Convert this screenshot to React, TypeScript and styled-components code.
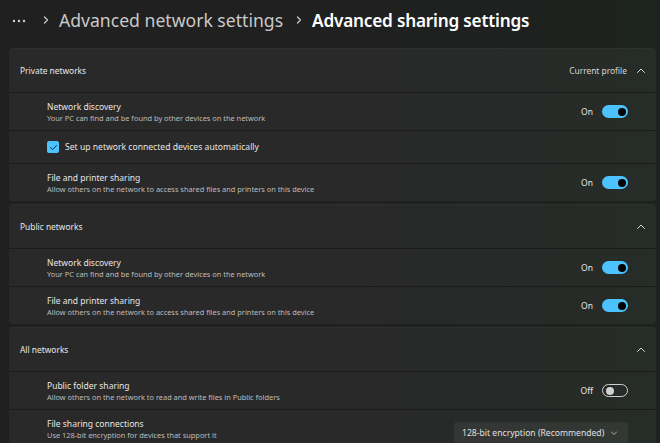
import React from "react";
import styled, { createGlobalStyle } from "styled-components";

const GlobalStyle = createGlobalStyle`
  html, body {
    margin: 0;
    padding: 0;
    background: #202020;
  }
  body {
    font-family: "Noto Sans", "Open Sans", sans-serif;
    color: #ffffff;
    -webkit-font-smoothing: antialiased;
  }
`;

type Setting = {
  kind: "toggle" | "check" | "select";
  title: string;
  desc?: string;
  on?: boolean;
  value?: string;
};

type Section = {
  name: string;
  note?: string;
  items: Setting[];
};

const sections: Section[] = [
  {
    name: "Private networks",
    note: "Current profile",
    items: [
      {
        kind: "toggle",
        title: "Network discovery",
        desc: "Your PC can find and be found by other devices on the network",
        on: true,
      },
      { kind: "check", title: "Set up network connected devices automatically" },
      {
        kind: "toggle",
        title: "File and printer sharing",
        desc: "Allow others on the network to access shared files and printers on this device",
        on: true,
      },
    ],
  },
  {
    name: "Public networks",
    items: [
      {
        kind: "toggle",
        title: "Network discovery",
        desc: "Your PC can find and be found by other devices on the network",
        on: true,
      },
      {
        kind: "toggle",
        title: "File and printer sharing",
        desc: "Allow others on the network to access shared files and printers on this device",
        on: true,
      },
    ],
  },
  {
    name: "All networks",
    items: [
      {
        kind: "toggle",
        title: "Public folder sharing",
        desc: "Allow others on the network to read and write files in Public folders",
        on: false,
      },
      {
        kind: "select",
        title: "File sharing connections",
        desc: "Use 128-bit encryption for devices that support it",
        value: "128-bit encryption (Recommended)",
      },
    ],
  },
];

function ChevronUp() {
  return (
    <svg width="10" height="10" viewBox="0 0 10 10" fill="none">
      <path d="M1.5 6.5 L5 3 L8.5 6.5" stroke="#d6d6d6" strokeWidth="1" strokeLinecap="round" strokeLinejoin="round" />
    </svg>
  );
}

function ChevronDown() {
  return (
    <svg width="8" height="8" viewBox="0 0 8 8" fill="none">
      <path d="M1.5 3 L4 5.5 L6.5 3" stroke="#bdbdbd" strokeWidth="0.9" strokeLinecap="round" strokeLinejoin="round" />
    </svg>
  );
}

function Check() {
  return (
    <svg width="9" height="9" viewBox="0 0 10 10" fill="none">
      <path d="M1.8 5.2 L4 7.3 L8.3 2.8" stroke="#0b2a3a" strokeWidth="1.1" strokeLinecap="round" strokeLinejoin="round" />
    </svg>
  );
}

function Crumb() {
  return (
    <svg width="8" height="10" viewBox="0 0 8 10" fill="none">
      <path d="M2.5 2 L5.5 5 L2.5 8" stroke="#cfcfcf" strokeWidth="1.2" strokeLinecap="round" strokeLinejoin="round" />
    </svg>
  );
}

function More() {
  return (
    <svg width="14" height="4" viewBox="0 0 14 4" fill="#d0d0d0">
      <circle cx="2" cy="2" r="1.2" />
      <circle cx="7" cy="2" r="1.2" />
      <circle cx="12" cy="2" r="1.2" />
    </svg>
  );
}

export default function App() {
  return (
    <Page>
      <GlobalStyle />
      <Header>
        <Dots>
          <More />
        </Dots>
        <Crumb />
        <Parent>Advanced network settings</Parent>
        <Crumb />
        <Current>Advanced sharing settings</Current>
      </Header>
      <Sections>
        {sections.map(s => (
          <Card key={s.name}>
            <CardHeader>
              <CardTitle>{s.name}</CardTitle>
              <HeaderRight>
                {s.note && <Note>{s.note}</Note>}
                <ChevronUp />
              </HeaderRight>
            </CardHeader>
            {s.items.map((it, i) =>
              it.kind === "check" ? (
                <CheckRow key={i}>
                  <CheckBox>
                    <Check />
                  </CheckBox>
                  <CheckLabel>{it.title}</CheckLabel>
                </CheckRow>
              ) : (
                <Row key={i}>
                  <Texts>
                    <Title>{it.title}</Title>
                    <Desc>{it.desc}</Desc>
                  </Texts>
                  {it.kind === "toggle" ? (
                    <ToggleWrap>
                      <State>{it.on ? "On" : "Off"}</State>
                      <Toggle on={!!it.on}>
                        <Knob on={!!it.on} />
                      </Toggle>
                    </ToggleWrap>
                  ) : (
                    <Select>
                      <span>{it.value}</span>
                      <ChevronDown />
                    </Select>
                  )}
                </Row>
              )
            )}
          </Card>
        ))}
      </Sections>
    </Page>
  );
}

const Page = styled.div`
  width: 660px;
  height: 443px;
  overflow: hidden;
  background: linear-gradient(90deg, #202020 0%, #202020 45%, #1d231f 100%);
`;

const Header = styled.div`
  height: 44px;
  display: flex;
  align-items: center;
  padding-left: 12px;
  gap: 8px;
  padding-bottom: 4px;
  box-sizing: border-box;
`;

const Dots = styled.span`
  display: flex;
  align-items: center;
  margin-right: 8px;
  padding-top: 2px;
`;

const Parent = styled.span`
  font-size: 17.6px;
  color: #c9c9c9;
  margin: 0 4px 0 1px;
`;

const Current = styled.span`
  font-size: 17.2px;
  font-weight: 600;
  letter-spacing: -0.2px;
  color: #ffffff;
  margin-left: 1px;
`;

const Sections = styled.div`
  display: flex;
  flex-direction: column;
  gap: 3px;
  padding: 4px 4px 0 9px;
`;

const Card = styled.div`
  background: rgba(255, 255, 255, 0.043);
  border-radius: 4px;
  overflow: hidden;
  border-top: 1px solid rgba(255, 255, 255, 0.03);
`;

const CardHeader = styled.div`
  height: 43px;
  display: flex;
  align-items: center;
  justify-content: space-between;
  padding: 0 10px 0 11px;
  border-bottom: 1px solid #1c1c1c;
`;

const CardTitle = styled.span`
  font-size: 8.4px;
  color: #e8e8e8;
`;

const HeaderRight = styled.div`
  display: flex;
  align-items: center;
  gap: 9px;
`;

const Note = styled.span`
  font-size: 8.4px;
  color: #d4d4d4;
`;

const Row = styled.div`
  height: 37px;
  display: flex;
  align-items: center;
  justify-content: space-between;
  padding: 0 28px 0 38px;
  border-bottom: 1px solid #1c1c1c;
  &:last-child {
    border-bottom: none;
  }
`;

const Texts = styled.div`
  display: flex;
  flex-direction: column;
  gap: 1px;
  padding-top: 1px;
`;

const Title = styled.span`
  font-size: 8.5px;
  color: #e6e6e6;
  line-height: 11px;
`;

const Desc = styled.span`
  font-size: 7.4px;
  color: #bdbdbd;
  line-height: 10px;
`;

const CheckRow = styled.div`
  height: 32px;
  display: flex;
  align-items: center;
  gap: 6px;
  padding-left: 38px;
  border-bottom: 1px solid #1c1c1c;
`;

const CheckBox = styled.div`
  width: 12px;
  height: 12px;
  border-radius: 2px;
  background: #4cc2ff;
  display: flex;
  align-items: center;
  justify-content: center;
`;

const CheckLabel = styled.span`
  font-size: 8.6px;
  color: #e6e6e6;
`;

const ToggleWrap = styled.div`
  display: flex;
  align-items: center;
  gap: 9px;
`;

const State = styled.span`
  font-size: 8.5px;
  color: #e6e6e6;
`;

const Toggle = styled.div<{ on: boolean }>`
  width: 26px;
  height: 13px;
  box-sizing: border-box;
  border-radius: 7px;
  display: flex;
  align-items: center;
  justify-content: ${p => (p.on ? "flex-end" : "flex-start")};
  padding: 0 2.5px;
  background: ${p => (p.on ? "#4cc2ff" : "transparent")};
  border: ${p => (p.on ? "none" : "1px solid #cfcfcf")};
`;

const Knob = styled.div<{ on: boolean }>`
  width: 8px;
  height: 8px;
  border-radius: 50%;
  background: ${p => (p.on ? "#000000" : "#d0d0d0")};
`;

const Select = styled.div`
  width: 174px;
  height: 21px;
  box-sizing: border-box;
  margin-top: 8px;
  border-radius: 3px;
  background: rgba(255, 255, 255, 0.06);
  display: flex;
  align-items: center;
  justify-content: space-between;
  padding: 0 10px 0 8px;
  font-size: 8.6px;
  color: #e0e0e0;
`;
